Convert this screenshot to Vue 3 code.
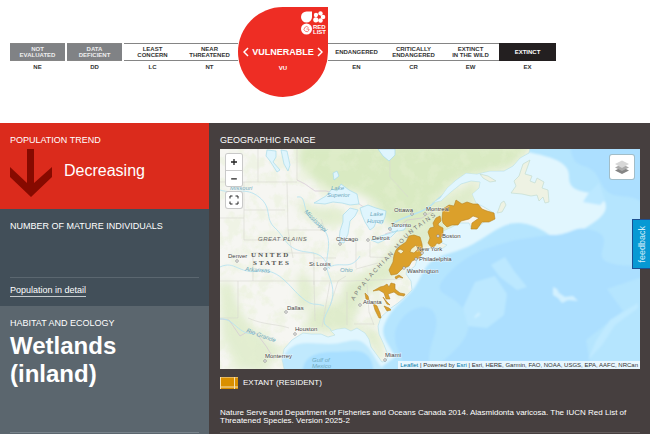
<script setup>
const before = [
  { code: 'NE', lines: ['NOT', 'EVALUATED'], kind: 'grey' },
  { code: 'DD', lines: ['DATA', 'DEFICIENT'], kind: 'grey' },
  { code: 'LC', lines: ['LEAST', 'CONCERN'], kind: 'plain' },
  { code: 'NT', lines: ['NEAR', 'THREATENED'], kind: 'plain' }
]
const after = [
  { code: 'EN', lines: ['ENDANGERED'], kind: 'plain' },
  { code: 'CR', lines: ['CRITICALLY', 'ENDANGERED'], kind: 'plain' },
  { code: 'EW', lines: ['EXTINCT', 'IN THE WILD'], kind: 'plain' },
  { code: 'EX', lines: ['EXTINCT'], kind: 'black' }
]
const cities = [
  { name: 'Ottawa', x: 394, y: 212, cx: 412, cy: 214 },
  { name: 'Montreal', x: 426, y: 211, cx: 425, cy: 214 },
  { name: 'Toronto', x: 391, y: 227, cx: 390, cy: 229 },
  { name: 'Detroit', x: 372, y: 240, cx: 368, cy: 240 },
  { name: 'Chicago', x: 336, y: 241, cx: 340, cy: 244 },
  { name: 'Boston', x: 442, y: 238, cx: 438, cy: 236 },
  { name: 'New York', x: 417, y: 251, cx: 422, cy: 253 },
  { name: 'Philadelphia', x: 419, y: 261, cx: 416, cy: 259 },
  { name: 'Washington', x: 407, y: 273, cx: 404, cy: 268 },
  { name: 'Denver', x: 228, y: 258, cx: 237, cy: 261 },
  { name: 'St Louis', x: 309, y: 266, cx: 325, cy: 269 },
  { name: 'Atlanta', x: 363, y: 304, cx: 360, cy: 305 },
  { name: 'Dallas', x: 287, y: 310, cx: 286, cy: 312 },
  { name: 'Houston', x: 295, y: 331, cx: 295, cy: 334 },
  { name: 'Monterrey', x: 265, y: 358, cx: 265, cy: 361 },
  { name: 'Miami', x: 385, y: 357, cx: 385, cy: 360 }
]
</script>

<template>
  <div class="page">
    <header class="scale">
      <div v-for="s in before" :key="s.code" class="step">
        <div class="box" :class="s.kind"><span v-for="l in s.lines" :key="l">{{ l }}</span></div>
        <div class="code">{{ s.code }}</div>
      </div>
      <div class="pin">
        <svg class="logo" viewBox="0 0 26 25" aria-hidden="true">
          <g fill="#fff">
            <path d="M1 6a5.500 5.500 0 0 1 5.500-5.500H12V6A5.500 5.500 0 0 1 1 6Z" />
            <circle cx="6.500" cy="18" r="5.500" />
            <circle cx="16" cy="4" r="2.200" /><circle cx="20.500" cy="2.500" r="2.200" />
            <circle cx="23" cy="6" r="2.300" /><circle cx="20.500" cy="9.500" r="2.300" />
            <circle cx="15.800" cy="8.800" r="2.600" />
          </g>
          <circle cx="19" cy="5.700" r="1.400" fill="#ee2d24" />
          <path d="M8.500 16.500A2.500 2.500 0 1 0 9 19V18H6.500" fill="none" stroke="#ee2d24" stroke-width=".6" />
          <text x="13" y="18" class="logo-text">RED</text>
          <text x="13" y="23" class="logo-text">LIST</text>
        </svg>
        <div class="current">
          <svg viewBox="0 0 6 10" aria-hidden="true"><path d="M5 1 1 5l4 4" /></svg>
          <span>VULNERABLE</span>
          <svg viewBox="0 0 6 10" aria-hidden="true"><path d="m1 1 4 4-4 4" /></svg>
        </div>
        <div class="current-code">VU</div>
      </div>
      <div v-for="s in after" :key="s.code" class="step">
        <div class="box" :class="s.kind"><span v-for="l in s.lines" :key="l">{{ l }}</span></div>
        <div class="code">{{ s.code }}</div>
      </div>
    </header>

    <main class="body">
      <div class="side">
        <section class="panel trend">
          <h2>POPULATION TREND</h2>
          <div class="trend-row">
            <svg viewBox="0 0 42 48" aria-hidden="true"><path d="M17 0h7v34l18-16v10L21 48 0 28V18l17 16Z" fill="#860a00" /></svg>
            <span>Decreasing</span>
          </div>
        </section>
        <section class="panel number">
          <h2>NUMBER OF MATURE INDIVIDUALS</h2>
          <div class="more"><a href="#population">Population in detail</a></div>
        </section>
        <section class="panel habitat">
          <h2>HABITAT AND ECOLOGY</h2>
          <p class="big">Wetlands (inland)</p>
          <hr />
        </section>
      </div>

      <section class="range">
        <h2>GEOGRAPHIC RANGE</h2>
        <div class="map">
          <svg class="canvas" viewBox="220 149 420 220" role="img" aria-label="Range map">
            <defs>
              <filter id="soft" x="-30%" y="-30%" width="160%" height="160%"><feGaussianBlur stdDeviation="4" /></filter>
              <filter id="edge" x="-10%" y="-10%" width="120%" height="120%"><feGaussianBlur stdDeviation="1" /></filter>
              <filter id="relief" x="0" y="0" width="100%" height="100%">
                <feTurbulence type="fractalNoise" baseFrequency=".07" numOctaves="4" seed="8" />
                <feColorMatrix values="0 0 0 0 .78  0 0 0 0 .87  0 0 0 0 .64  0 5 0 0 -2.300" />
              </filter>
              <path id="land" d="M215 144H531L529 153 520 158 513 166 504 171 490 171 477 174 466 173 456 180 447 188 440 198 432 203 441 201 451 192 461 184 471 181 480 182 479 188 472 194 476 203 484 207 494 213 493 219 484 222 476 229 471 227 469 223 459 223 452 227 443 231 440 237 442 243 447 245 443 248 435 247 424 250 418 257 415 266 410 270 408 264 406 274 411 281 412 290 405 297 398 303 391 308 381 317 378 326 379 334 384 345 388 355 386 361 382 362 377 355 371 347 369 339 365 333 357 328 351 331 345 328 337 329 331 331 335 335 328 337 321 334 311 334 303 333 292 340 284 349 282 359 285 373H215Z" />
              <clipPath id="landclip"><use href="#land" /></clipPath>
              <path id="ridge" d="M354 301C369 276 386 264 400 246S425 226 446 207" />
            </defs>

            <rect x="215" y="144" width="430" height="230" fill="#b5e5fe" />
            <g filter="url(#edge)">
              <path d="M505 144C520 155 570 153 569 176S599 187 605 202 587 225 573 237 551 231 530 225 499 228 480 240 452 251 437 258 422 280 411 292 394 306 386 321 389 343 395 357L375 372H275V334L390 270 440 190Z" fill="#e1f6fe" />
              <path d="M570 144H645V205C628 188 611 206 600 181S573 177 570 144ZM548 235C574 236 573 223 595 231S589 257 610 263 645 261 645 276L607 289 623 311 586 340 592 373H430C449 354 477 338 466 314S426 298 447 275 488 248 515 240ZM408 373C397 347 389 337 400 321S433 301 436 318 425 346 430 373Z" fill="#acdfff" />
              <path d="M475 282 495 276 507 294 504 315 487 328 468 326 463 308ZM588 194 599 183 605 200 600 205 583 202ZM491 265 505 257 514 271 527 287 517 290 500 277Z" fill="#bce8ff" />
              <path d="m474 317 5-5 1 3-5 3ZM553 287l4 2 2 4 6 4 8-1 5 5-10-1-6 3-4-5-5-3Z" fill="#d3f1ff" />
              <path d="M588 360 596 341 610 320 638 303V308L615 325 602 345Z" fill="#c0eaff" />
              <path d="M282 360C291 337 311 344 329 344S356 335 366 345 377 369 393 373H280Z" fill="#c0e9fd" />
              <path d="M302 373C305 348 327 353 351 351S373 371 374 373Z" fill="#a9dfff" />
            </g>
            <use href="#land" fill="#f6f6f2" stroke="#bde2ed" stroke-width=".8" />
            <g clip-path="url(#landclip)">
              <g filter="url(#soft)" fill="#d9eac2">
                <path d="M300 144H535L510 168 459 179 430 204 427 218 404 230 388 225 372 200 352 190 332 193 314 181 297 162Z" />
                <path d="M426 207 475 180 480 197 445 236 424 247 407 250 399 275 366 294 351 325 377 330 384 360 375 351 362 331 305 332 310 308 340 302 344 284 371 270 398 241Z" opacity=".8" />
                <path d="M293 198 311 207 340 208 350 222 325 226 303 214ZM220 283 230 281 241 312 253 328 282 350 262 373 239 369 222 337ZM297 273 310 276 315 300 298 315Z" opacity=".7" />
              </g>
              <rect x="220" y="149" width="320" height="220" filter="url(#relief)" opacity=".4" />
              <g fill="none" stroke="#d9d8d2" stroke-width=".6">
                <path d="M220 182H297M258 149V182M297 149V180M244 182V240M220 218H244M244 210H285M287 182 288 230 293 258M244 240H289M288 230H325L321 219M253 253H314V285M220 281H314L315 321M238 281V318H220M253 281V253M314 258H336M314 281H350L402 279M330 282 322 327M346 276 338 281 330 306M347 292V325M367 284 369 312 374 325M354 324H374M356 237V268M370 242V257L402 258M356 269 378 263M390 149V177L408 197M248 318C263 325 278 324 289 328" />
                <path d="M297 180 305 184 315 191 326 191 337 194M359 204 370 211M385 234 394 231 407 220 422 218 433 211M220 319 229 320 240 336 249 331 257 334 266 346 274 359" stroke="#d2bfd5" />
              </g>
              <g fill="none" stroke="#b8e3f0" stroke-width=".9">
                <path d="M220 190C236 195 245 186 259 197S264 218 275 228 286 250 307 252 324 264 330 269M297 197C309 195 299 214 318 225S324 257 327 269 338 291 328 310 330 324 331 331M220 267C235 260 238 274 258 271S287 284 300 296 315 302 324 306M325 270C339 258 349 273 360 256M220 319C234 317 239 337 255 333" />
                <path d="M394 223C409 213 422 216 438 199L460 181" stroke-width="1.500" />
              </g>
              <g fill="#dff5fd" stroke="#a9dbea" stroke-width=".7">
                <path d="M267 150 276 151 276 157 273 162 280 170 277 172 270 161 266 156ZM281 150 287 151 290 165 288 171 284 164Z" />
                <path d="M378 149H395V155L389 161 383 156ZM333 173 337 171 339 176 334 180Z" />
                <path d="M314 203 326 196 332 189 337 191 341 184 349 190 357 194 359 204 350 205 342 203 333 202 325 204Z" />
                <path d="M343 215 350 208 358 210 355 216 350 221 348 234 344 243 339 242 340 231 343 222ZM360 208 368 205 376 208 386 211 385 217 382 224 376 222 374 227 370 230 365 222 362 215Z" />
                <path d="M371 240 381 236 394 232 398 230 391 237 378 243ZM388 228 397 225 407 225 404 230 393 232Z" />
              </g>
            </g>
            <g fill="#eef2e3" stroke="#c4ddd1" stroke-width=".7">
              <path d="M530 160 523 164 519 176 514 181 516 186 511 193 522 194 531 196 537 195 539 201 543 197 545 203 549 202 548 190 542 188 544 182 537 178 535 183 530 181 532 176 525 174Z" />
              <path d="M480 174 488 176 496 181 490 182 483 178ZM498 211 501 203 504 201 506 205 502 212 497 213Z" />
            </g>
            <text class="ridge"><textPath href="#ridge">APPALACHIAN MOUNTAINS</textPath></text>

            <g fill="#dba02b" stroke="#b78323" stroke-width=".6">
              <path d="M442 219 443 209 449 205 454 206 456 200 459 202 462 204 467 202 473 204 478 204 482 209 487 211 494 213 495 219 489 222 482 222 477 229 471 229 472 223 479 218 473 216 469 219 461 221 458 225 452 225 447 227 443 223Z" />
              <path d="M436 218 440 216 441 221 438 224 439 226 443 228 443 235 441 237 442 242 439 244 437 243 434 247 431 247 428 243 430 238 428 232 430 228 434 227 433 223Z" />
              <path d="M394 255 396 250 400 246 406 242 409 236 414 235 420 237 422 244 423 253 419 258 412 261 409 266 402 269 397 274 391 275 389 270 393 262Z" />
              <path d="M395 277 399 275 403 278 399 277 396 279ZM373 291 380 287 384 286 387 284 389 287 391 283 395 284 395 289 400 293 405 294 404 296 398 295 394 292 388 294 390 299 386 299 384 293 379 290ZM365 293 368 296 369 300 366 299ZM373 303 377 306 380 313 381 318 379 318 375 310ZM383 297 387 302 390 305 387 304ZM384 306 389 308 391 310 387 311Z" />
              <path d="M397 251 400 249 404 251 401 254ZM411 249 416 245 418 249 414 253 410 252Z" fill="#f1efcb" />
            </g>

            <g class="cities">
              <g v-for="c in cities" :key="c.name">
                <circle :cx="c.cx" :cy="c.cy" r="1.300" />
                <text :x="c.x" :y="c.y">{{ c.name }}</text>
              </g>
            </g>
            <g class="water">
              <text x="331" y="190">Lake</text><text x="327" y="197">Superior</text>
              <text x="370" y="216">Lake</text><text x="367" y="223">Huron</text>
              <text x="230" y="190">Missouri</text>
              <text x="245" y="271" transform="rotate(4 245 271)">Arkansas</text>
              <text x="340" y="272">Ohio</text>
              <text x="304" y="212" transform="rotate(45 304 212)">Mississippi</text>
              <text x="246" y="332" transform="rotate(20 246 332)">Rio Grande</text>
              <text x="312" y="362">Gulf of</text><text x="312" y="368">Mexico</text>
            </g>
            <text x="258" y="241" class="plains">GREAT PLAINS</text>
            <text x="251" y="257" class="country">UNITED</text>
            <text x="253" y="265" class="country">STATES</text>
          </svg>

          <div class="zoom">
            <button type="button" aria-label="Zoom in"><svg viewBox="0 0 16 16"><path d="M5 8h6M8 5v6" /></svg></button>
            <button type="button" aria-label="Zoom out"><svg viewBox="0 0 16 16"><path d="M5 8.500h6" /></svg></button>
          </div>
          <button type="button" class="full" aria-label="Full screen"><svg viewBox="0 0 16 16"><path d="M4 6.500V4h2.500M9.500 4H12v2.500M12 9.500V12H9.500M6.500 12H4V9.500" /></svg></button>
          <button type="button" class="layers" aria-label="Layers">
            <svg viewBox="0 0 24 24">
              <path d="m5 15.500 7 3.500 7-3.500-7-3.500Z" fill="#858585" />
              <path d="m5 12.500 7 3.500 7-3.500-7-3.500Z" fill="#ababab" />
              <path d="m5 9 7 4 7-4-7-3.500Z" fill="#d7d7d7" />
            </svg>
          </button>
          <div class="credit"><a href="#leaflet">Leaflet</a> | Powered by <a href="#esri">Esri</a> | Esri, HERE, Garmin, FAO, NOAA, USGS, EPA, AAFC, NRCan</div>
        </div>
        <div class="legend">
          <svg viewBox="0 0 18 12" aria-hidden="true"><path d="M0 0h18v12H0Z" fill="#d98f00" /><path d="M0 0h18M0 10h18M14.500 0v12M.5 0v12" stroke="#f5dfb2" /></svg>
          <span>EXTANT (RESIDENT)</span>
        </div>
        <p class="source">Nature Serve and Department of Fisheries and Oceans Canada 2014. Alasmidonta varicosa. The IUCN Red List of Threatened Species. Version 2025-2</p>
        <hr />
      </section>
    </main>
    <button type="button" class="feedback"><span>feedback</span></button>
  </div>
</template>

<style>
body { margin: 0; background: #fff; }
</style>

<style scoped>
.page { font-family: "Liberation Sans", Arial, sans-serif; min-height: 100vh; display: flex; flex-direction: column; color: #fff; }
.page * { box-sizing: border-box; }
button { padding: 0; border: 0; background: #fff; font-family: inherit; cursor: pointer; }
h2 { margin: 0; font-size: 9px; line-height: 12px; font-weight: 400; }
hr { border: 0; margin: 0; height: 1px; }

.scale { display: grid; grid-template-columns: repeat(4, 57fr) 90fr repeat(4, 57fr); padding: 7px 94px 26px 10px; }
.step { padding-top: 36px; font-weight: 700; font-size: 6px; line-height: 6px; text-align: center; color: #333; min-width: 0; }
.box { height: 18px; display: flex; flex-direction: column; align-items: center; justify-content: center; white-space: nowrap; border: solid #858585; border-width: 1px 0; }
.grey { background: #808285; color: #eee; margin-right: 2px; }
.black { background: #231f20; color: #fff; border-color: #231f20; }
.code { padding-top: 3px; }
.grey + .code { margin-right: 2px; }
.pin { position: relative; aspect-ratio: 1; background: #ee2d24; border-radius: 50% 0 50% 50%; display: flex; flex-direction: column; align-items: center; padding-top: 39px; font-weight: 700; }
.logo { position: absolute; top: 4px; right: 2px; width: 26px; height: 25px; }
.logo-text { font-size: 6px; font-weight: 700; fill: #fff; }
.current { display: flex; align-items: center; gap: 3px; font-size: 9px; line-height: 12px; }
.current svg { width: 6px; height: 10px; fill: none; stroke: #fff; stroke-width: 1.5; }
.current-code { font-size: 6px; line-height: 6px; padding-top: 7px; }

.body { flex: 1; display: grid; grid-template-columns: 209px minmax(0, 1fr); background: #463f3f; }
.side { display: flex; flex-direction: column; }
.panel { padding: 11px 10px 0; }
.trend { background: #db2b1c; height: 86px; }
.trend-row { display: flex; align-items: center; gap: 12px; padding-top: 3px; font-size: 16px; }
.trend-row svg { width: 42px; height: 48px; }
.trend-row span { padding-bottom: 4px; }
.number { background: #424f59; height: 97px; display: flex; flex-direction: column; justify-content: space-between; }
.more { border-top: 1px solid #5b6770; padding: 6px 0 9px; font-size: 9px; line-height: 12px; }
.more a { color: #fff; text-decoration: none; display: inline-block; border-bottom: 1px solid #c5cacd; }
.habitat { background: #5b666e; flex: 1; }
.big { margin: 0; padding: 3px 0 44px; font-size: 24px; line-height: 28px; font-weight: 700; max-width: 140px; }
.habitat hr { background: #77828a; }

.range { padding: 11px 10px 0 11px; }
.map { position: relative; margin-top: 3px; }
.canvas { display: block; width: 100%; height: auto; }
.cities text { font-size: 6px; fill: #444; stroke: #fff; stroke-width: 1; stroke-opacity: .6; paint-order: stroke; }
.cities circle { fill: #fff; stroke: #777; stroke-width: .6; }
.water { font-size: 6px; font-style: italic; fill: #6fa9bd; }
.plains { font-size: 6px; font-style: italic; letter-spacing: .5px; fill: #666; }
.country { font-family: "Liberation Serif", serif; font-weight: 700; font-size: 7px; letter-spacing: 2px; fill: #555; }
.ridge { font-size: 6px; letter-spacing: 2px; fill: #777; }
.zoom { position: absolute; left: 6px; top: 5px; width: 16px; border-radius: 2px; overflow: hidden; box-shadow: 0 0 0 1px #c9c9c9; }
.zoom button, .full { display: block; width: 16px; height: 16px; }
.zoom button + button { border-top: 1px solid #ccc; }
.zoom svg, .full svg { display: block; width: 100%; height: 100%; fill: none; stroke: #222; stroke-width: 1.3; }
.full { position: absolute; left: 6px; top: 43px; border-radius: 2px; box-shadow: 0 0 0 1px #c9c9c9; }
.full svg { stroke-width: 1; }
.layers { position: absolute; right: 6px; top: 6px; width: 24px; height: 24px; border-radius: 2px; box-shadow: 0 0 0 1px #a2bdc8; }
.layers svg { display: block; }
.credit { position: absolute; right: 0; bottom: 0; padding: 0 2px; background: #ffffffb3; color: #333; font-size: 6px; line-height: 8px; white-space: nowrap; }
.credit a { color: #0078a8; text-decoration: none; }
.legend { display: flex; align-items: center; gap: 5px; padding-top: 8px; font-size: 8px; line-height: 12px; }
.legend svg { width: 18px; height: 12px; }
.source { margin: 0; padding: 20px 0 7px; font-size: 8px; line-height: 8px; }
.range hr { background: #625b5b; }
.feedback { position: fixed; right: 0; top: 219px; width: 18px; height: 50px; background: #0799d4; border: solid #1d4f91; border-width: 1px 0 1px 1px; color: #d5edf8; font-size: 9px; display: flex; align-items: center; justify-content: center; }
.feedback span { writing-mode: vertical-rl; transform: rotate(180deg); }
</style>
